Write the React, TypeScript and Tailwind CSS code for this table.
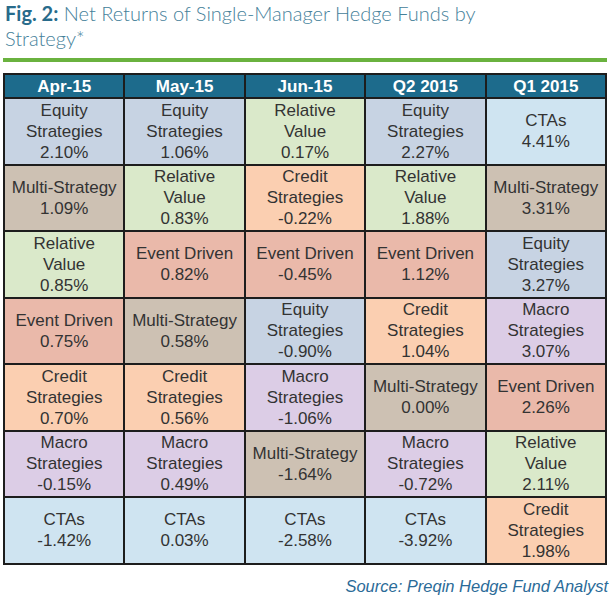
const COLORS: Record<string, string> = {
  eq: "bg-[#c7d3e3]",
  rv: "bg-[#dae9ca]",
  ms: "bg-[#cdc1b3]",
  cr: "bg-[#fbcfb1]",
  ed: "bg-[#eab9aa]",
  mac: "bg-[#dccde6]",
  cta: "bg-[#cfe4f1]",
};

const LABELS: Record<string, string[]> = {
  eq: ["Equity", "Strategies"],
  rv: ["Relative", "Value"],
  ms: ["Multi-Strategy"],
  cr: ["Credit", "Strategies"],
  ed: ["Event Driven"],
  mac: ["Macro", "Strategies"],
  cta: ["CTAs"],
};

const HEADERS = ["Apr-15", "May-15", "Jun-15", "Q2 2015", "Q1 2015"];

// one array per column, ranked best to worst
const COLUMNS: [string, string][][] = [
  [["eq", "2.10%"], ["ms", "1.09%"], ["rv", "0.85%"], ["ed", "0.75%"], ["cr", "0.70%"], ["mac", "-0.15%"], ["cta", "-1.42%"]],
  [["eq", "1.06%"], ["rv", "0.83%"], ["ed", "0.82%"], ["ms", "0.58%"], ["cr", "0.56%"], ["mac", "0.49%"], ["cta", "0.03%"]],
  [["rv", "0.17%"], ["cr", "-0.22%"], ["ed", "-0.45%"], ["eq", "-0.90%"], ["mac", "-1.06%"], ["ms", "-1.64%"], ["cta", "-2.58%"]],
  [["eq", "2.27%"], ["rv", "1.88%"], ["ed", "1.12%"], ["cr", "1.04%"], ["ms", "0.00%"], ["mac", "-0.72%"], ["cta", "-3.92%"]],
  [["cta", "4.41%"], ["ms", "3.31%"], ["eq", "3.27%"], ["mac", "3.07%"], ["ed", "2.26%"], ["rv", "2.11%"], ["cr", "1.98%"]],
];

export default function App() {
  const rows = [0, 1, 2, 3, 4, 5, 6];
  return (
    <div className="w-[611px] h-[600px] bg-white overflow-hidden">
      <h1
        className="pl-[5px] pt-[1px] text-[20px] leading-[25px] text-[#45819a] font-light"
        style={{ fontFamily: "Lato, 'Open Sans', sans-serif" }}
      >
        <span className="font-bold text-[#286b8b]">Fig. 2:</span> Net Returns of Single-Manager Hedge Funds by
        <br />
        Strategy*
      </h1>
      <div className="mx-[3px] mt-[7px] h-[4px] w-[604px] bg-[#6ab23f]" />

      <div
        className="mx-[3px] mt-[11px] w-[604px] grid grid-cols-5 grid-rows-[22px_repeat(7,64.5px)] gap-[2px] p-[2px] bg-[#1d1d1d] text-[17px] leading-[21px] text-[#333333]"
        style={{ fontFamily: "'Liberation Sans', Arial, sans-serif" }}
      >
        {HEADERS.map((h) => (
          <div key={h} className="flex items-center justify-center bg-[#1d6b8c] font-bold text-white text-[17px]">
            {h}
          </div>
        ))}
        {rows.map((r) =>
          COLUMNS.map((col, c) => {
            const [kind, value] = col[r];
            return (
              <div key={`${r}-${c}`} className={`flex flex-col items-center justify-center text-center ${COLORS[kind]}`}>
                {LABELS[kind].map((l) => (
                  <span key={l}>{l}</span>
                ))}
                <span>{value}</span>
              </div>
            );
          })
        )}
      </div>

      <p
        className="mt-[12px] pr-[3px] text-right italic text-[16.5px] leading-[18px] text-[#2b6b98]"
        style={{ fontFamily: "'Liberation Sans', Arial, sans-serif" }}
      >
        Source: Preqin Hedge Fund Analyst
      </p>
    </div>
  );
}
